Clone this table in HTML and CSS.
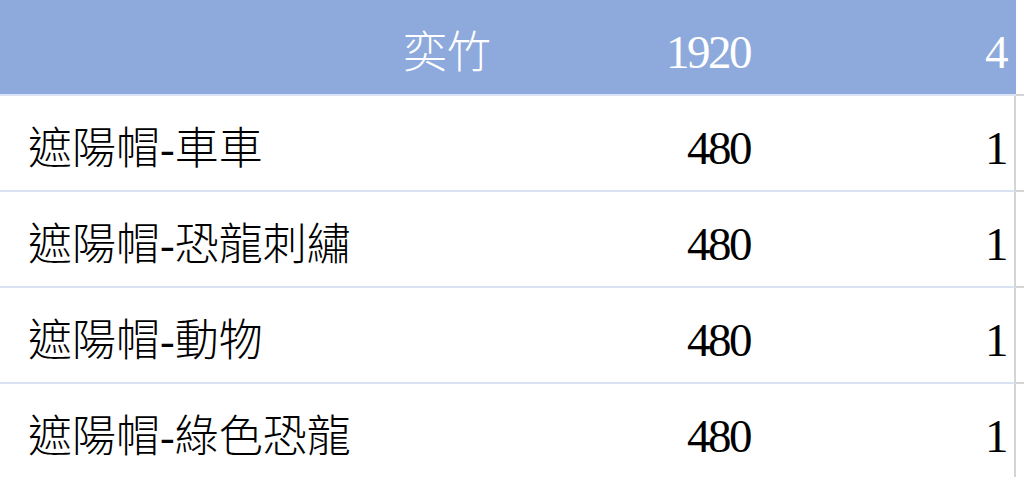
FILE: index.html
```html
<!DOCTYPE html>
<html lang="zh-Hant">
<head>
<meta charset="utf-8">
<link rel="stylesheet" href="styles.css">
</head>
<body>
<div class="sheet">
  <div class="row head">
    <div class="cell hname">奕竹</div>
    <div class="cell num">1920</div>
    <div class="cell num last">4</div>
    <div class="spill"></div>
  </div>
  <div class="row">
    <div class="cell name">遮陽帽-車車</div>
    <div class="cell num">480</div>
    <div class="cell num last">1</div>
    <div class="spill"></div>
  </div>
  <div class="row">
    <div class="cell name">遮陽帽-恐龍刺繡</div>
    <div class="cell num">480</div>
    <div class="cell num last">1</div>
    <div class="spill"></div>
  </div>
  <div class="row">
    <div class="cell name">遮陽帽-動物</div>
    <div class="cell num">480</div>
    <div class="cell num last">1</div>
    <div class="spill"></div>
  </div>
  <div class="row">
    <div class="cell name">遮陽帽-綠色恐龍</div>
    <div class="cell num">480</div>
    <div class="cell num last">1</div>
    <div class="spill"></div>
  </div>
</div>
</body>
</html>
```

FILE: styles.css
```css
html, body {
  margin: 0;
  padding: 0;
  background: #ffffff;
}
body {
  width: 1024px;
  height: 477px;
  overflow: hidden;
  font-family: "Liberation Serif", "Noto Sans CJK TC", serif;
  color: #000000;
}
.sheet {
  display: flex;
  flex-direction: column;
}
.row {
  display: grid;
  grid-template-columns: 560px 200px 256px 8px;
  height: 96px;
}
.cell {
  box-sizing: border-box;
  height: 96px;
  display: flex;
  align-items: flex-end;
  padding-bottom: 18px;
  line-height: 1;
  border-bottom: 2px solid #d9e1f2;
  white-space: nowrap;
}
.name {
  font-size: 44px;
  font-weight: 300;
  padding-left: 28px;
}
.hname {
  font-size: 44px;
  font-weight: 300;
  padding-left: 403px;
}
.num {
  font-size: 47px;
  font-weight: 400;
  letter-spacing: -2.5px;
  justify-content: flex-end;
  padding-right: 10px;
}
.num.last {
  padding-right: 8px;
  border-right: 2px solid #d4d4d4;
}
.spill {
  box-sizing: border-box;
  height: 96px;
  border-bottom: 2px solid #d4d4d4;
}
.head .cell {
  background: #8eaadc;
  color: #ffffff;
  border-bottom-color: #dbe3f4;
}
.head .num.last {
  border-right: none;
  padding-right: 10px;
}
```
